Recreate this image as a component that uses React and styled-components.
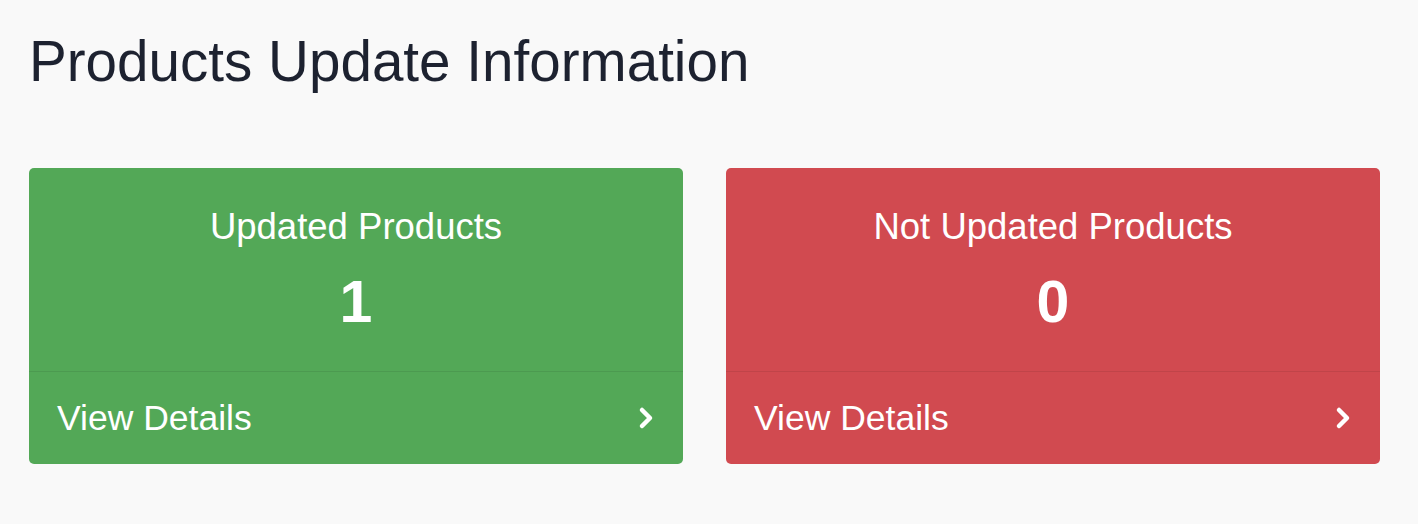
import styled, { createGlobalStyle } from 'styled-components';

const GlobalStyle = createGlobalStyle`
  html, body {
    margin: 0;
    padding: 0;
    background: #f9f9f9;
    font-family: "Liberation Sans", Arial, sans-serif;
  }
`;

const Page = styled.div`
  padding: 26px 37px 0 29px;
`;

const Title = styled.h1`
  margin: 0 0 70px 0;
  font-size: 56.6px;
  font-weight: 400;
  line-height: 72px;
  color: #1d2230;
`;

const Grid = styled.div`
  display: grid;
  grid-template-columns: 654px 654px;
  column-gap: 43px;
`;

const Card = styled.div`
  border-radius: 5px;
  overflow: hidden;
  background: ${p => p.$color};
  color: #fff;
`;

const Body = styled.div`
  height: 204px;
  display: flex;
  flex-direction: column;
  align-items: center;
  padding-top: 39px;
  box-sizing: border-box;
  border-bottom: 1px solid rgba(0, 0, 0, 0.08);
`;

const Label = styled.div`
  font-size: 36.5px;
  line-height: 40px;
`;

const Count = styled.div`
  margin-top: 25px;
  font-size: 59px;
  font-weight: 700;
  line-height: 60px;
`;

const Footer = styled.a`
  height: 92px;
  display: flex;
  align-items: center;
  justify-content: space-between;
  padding: 0 28px 0 28px;
  color: #fff;
  text-decoration: none;
  font-size: 35.5px;
`;

const Chevron = () => (
  <svg width="18" height="24" viewBox="0 0 18 24" fill="none">
    <path d="M5 4l8 8-8 8" stroke="#fff" strokeWidth="4.5" strokeLinecap="round" strokeLinejoin="round" />
  </svg>
);

const cards = [
  { label: 'Updated Products', count: 1, color: '#53a857' },
  { label: 'Not Updated Products', count: 0, color: '#d14a50' },
];

export default function App() {
  return (
    <Page>
      <GlobalStyle />
      <Title>Products Update Information</Title>
      <Grid>
        {cards.map(c => (
          <Card key={c.label} $color={c.color}>
            <Body>
              <Label>{c.label}</Label>
              <Count>{c.count}</Count>
            </Body>
            <Footer href="#">
              View Details
              <Chevron />
            </Footer>
          </Card>
        ))}
      </Grid>
    </Page>
  );
}
